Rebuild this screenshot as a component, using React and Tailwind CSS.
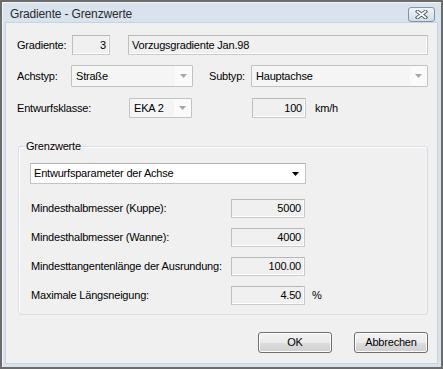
const Arrow = ({ dark }) => (
  <svg width="7" height="4" viewBox="0 0 7 4" className="block">
    <polygon points="0,0 7,0 3.5,4" fill={dark ? "#000000" : "#a7a7a7"} />
  </svg>
);

const ReadBox = ({ w, h = "h-[20px]", right, children }) => (
  <div
    className={`${w} ${h} flex items-center border border-[#cacaca] border-t-[#b8b8b8] border-l-[#c0c0c0] bg-[#f0f0f0] shadow-[inset_-1px_-1px_0_#ffffff] ${right ? "justify-end pr-[3px]" : "pl-[3px]"}`}
  >
    {children}
  </div>
);

const Combo = ({ w, h = "h-[22px]", text, pl = "pl-[4px]" }) => (
  <div className={`${w} ${h} flex border border-[#c3c3c3] bg-[#f5f5f5] rounded-[1px]`}>
    <div className={`flex-1 flex items-center ${pl}`}>{text}</div>
    <div className="w-[17px] flex items-center justify-center bg-[#fafafa]">
      <Arrow />
    </div>
  </div>
);

const ValueRow = ({ label, value, unit, first }) => (
  <div className={`flex items-center h-[19px] ${first ? "mt-[15px]" : "mt-[10px]"}`}>
    <div className="w-[201px] pl-[1px]">{label}</div>
    <ReadBox w="w-[74px]" h="h-[19px]" right>
      {value}
    </ReadBox>
    {unit && <div className="ml-[7px]">{unit}</div>}
  </div>
);

export default function App() {
  return (
    <div className="w-[443px] h-[369px] bg-[#6c6c6c] p-[2px] font-['Liberation_Sans',Arial,sans-serif] text-[11px] tracking-[-0.2px] text-black leading-[13px]">
      <div className="w-full h-full flex flex-col bg-[#d9e3ee] shadow-[inset_1px_1px_0_#f4f7fa]">
        {/* Title bar */}
        <div className="h-[21px] flex items-start pl-[8px] pr-[6px]">
          <div className="mt-[5px] text-[12px] leading-[14px] tracking-[-0.15px] text-[#2b2b2b]">
            Gradiente - Grenzwerte
          </div>
          <div className="ml-auto mt-[5px] w-[27px] h-[15px] rounded-[3px] border border-[#8193ab] bg-gradient-to-b from-[#f1f4f8] to-[#d1dbe6] flex items-center justify-center">
            <svg width="13" height="9" viewBox="0 0 13 9" className="block">
              <path d="M2.5 1.5 L10.5 7.5 M10.5 1.5 L2.5 7.5" stroke="#4e5a69" strokeWidth="3.6" strokeLinecap="square" fill="none" />
              <path d="M2.5 1.5 L10.5 7.5 M10.5 1.5 L2.5 7.5" stroke="#ffffff" strokeWidth="1.7" strokeLinecap="square" fill="none" />
            </svg>
          </div>
        </div>

        {/* Client */}
        <div className="mx-[4px] h-[340px] bg-[#f0f0f0] pl-[11px] shadow-[0_0_0_1px_#c6d3e0] flex flex-col">
          {/* Row 1 */}
          <div className="flex items-center mt-[12px] h-[20px]">
            <div className="w-[55px]">Gradiente:</div>
            <ReadBox w="w-[38px]" right>
              3
            </ReadBox>
            <div className="ml-[18px]">
              <ReadBox w="w-[300px]">Vorzugsgradiente Jan.98</ReadBox>
            </div>
          </div>

          {/* Row 2 */}
          <div className="flex items-center mt-[10px] h-[22px]">
            <div className="w-[54px]">Achstyp:</div>
            <Combo w="w-[122px]" text="Straße" />
            <div className="ml-[16px] w-[42px]">Subtyp:</div>
            <Combo w="w-[177px]" text="Hauptachse" />
          </div>

          {/* Row 3 */}
          <div className="flex items-center mt-[11px] h-[20px]">
            <div className="w-[112px]">Entwurfsklasse:</div>
            <Combo w="w-[63px]" h="h-[20px]" text="EKA 2" />
            <div className="ml-[60px]">
              <ReadBox w="w-[54px]" right>
                100
              </ReadBox>
            </div>
            <div className="ml-[9px]">km/h</div>
          </div>

          {/* Group */}
          <fieldset className="mt-[22px] ml-[1px] w-[410px] border border-[#d5dfe5] rounded-[3px] pl-[6px] pb-[9px] shadow-[inset_1px_1px_0_#ffffff]">
            <legend className="px-[1px] leading-[13px]">Grenzwerte</legend>
            <div className="ml-[5px] mt-[10px] w-[276px] h-[21px] flex items-center bg-white border border-[#c4c4c4] border-t-[#b2b2b2] pl-[3px] pr-[6px]">
              <span>Entwurfsparameter der Achse</span>
              <span className="ml-auto">
                <Arrow dark />
              </span>
            </div>
            <div className="ml-[5px]">
              <ValueRow first label="Mindesthalbmesser (Kuppe):" value="5000" />
              <ValueRow label="Mindesthalbmesser (Wanne):" value="4000" />
              <ValueRow label="Mindesttangentenlänge der Ausrundung:" value="100.00" />
              <ValueRow label="Maximale Längsneigung:" value="4.50" unit="%" />
            </div>
          </fieldset>

          {/* Buttons */}
          <div className="flex justify-end gap-[22px] pr-[9px] mt-[17px]">
            <button className="w-[74px] h-[21px] rounded-[3px] border border-[#707070] bg-[linear-gradient(to_bottom,#f2f2f2_0%,#ebebeb_50%,#dddddd_51%,#cfcfcf_100%)] shadow-[inset_0_0_0_1px_#fcfcfc] flex items-center justify-center text-black">
              OK
            </button>
            <button className="w-[74px] h-[21px] rounded-[3px] border border-[#707070] bg-[linear-gradient(to_bottom,#f2f2f2_0%,#ebebeb_50%,#dddddd_51%,#cfcfcf_100%)] shadow-[inset_0_0_0_1px_#fcfcfc] flex items-center justify-center text-black">
              Abbrechen
            </button>
          </div>
        </div>
      </div>
    </div>
  );
}
